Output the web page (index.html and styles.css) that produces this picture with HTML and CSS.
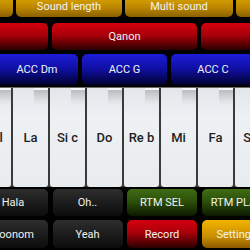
FILE: index.html
```html
<!DOCTYPE html>
<html lang="en">
<head>
    <meta charset="UTF-8">
    <meta name="viewport" content="width=device-width, initial-scale=1.0">
    <title>Piano</title>
    <link rel="stylesheet" href="styles.css">
</head>
<body>
    <div class="screen">
        <div class="row row-top">
            <div class="btn yellow w100"></div>
            <div class="btn yellow w106">Sound length</div>
            <div class="btn yellow w108">Multi sound</div>
            <div class="btn yellow w100"></div>
        </div>
        <div class="row row-red">
            <div class="btn red w100"></div>
            <div class="btn red w145">Qanon</div>
            <div class="btn red w100"></div>
        </div>
        <div class="row row-blue">
            <div class="btn blue w82">ACC Dm</div>
            <div class="btn blue w85">ACC G</div>
            <div class="btn blue w84">ACC C</div>
        </div>

        <div class="piano">
            <div class="key">Sol</div>
            <div class="key">La</div>
            <div class="key">Si c</div>
            <div class="key">Do</div>
            <div class="key">Re b</div>
            <div class="key">Mi</div>
            <div class="key">Fa</div>
            <div class="key">Sol</div>
        </div>

        <div class="row row-bottom">
            <div class="btn black w70">Hala</div>
            <div class="btn black w70">Oh..</div>
            <div class="btn green w70">RTM SEL</div>
            <div class="btn green w70">RTM PLAY</div>
        </div>
        <div class="row row-bottom last">
            <div class="btn black w70">Doonom</div>
            <div class="btn black w70">Yeah</div>
            <div class="btn red w70">Record</div>
            <div class="btn gold w70">Settings</div>
        </div>
    </div>
</body>
</html>
```

FILE: styles.css
```css
body {
    margin: 0;
    background-color: #000;
    font-family: Roboto, "Noto Sans", sans-serif;
    overflow: hidden;
}

.screen {
    width: 250px;
    height: 250px;
    overflow: hidden;
    display: flex;
    flex-direction: column;
}

.row {
    display: flex;
    flex-shrink: 0;
}

.btn {
    flex-shrink: 0;
    display: flex;
    align-items: center;
    justify-content: center;
    border-radius: 5px;
    color: #f2f2f2;
    font-size: 11px;
    white-space: nowrap;
}

/* rows */
.row-top {
    height: 22px;
    margin-top: -5px;
    margin-left: -87px;
    gap: 3px;
}

.row-red {
    height: 27px;
    margin-top: 6px;
    margin-left: -52px;
    gap: 4px;
}

.row-blue {
    height: 31px;
    margin-top: 4px;
    margin-left: -4px;
    gap: 4px;
}

.row-bottom {
    height: 27px;
    margin-top: 2px;
    margin-left: -22px;
    gap: 4.5px;
    font-size: 11px;
}

.row-bottom.last {
    height: 28px;
    margin-top: 4px;
}

/* widths */
.w70 { width: 70px; }
.w82 { width: 82px; }
.w84 { width: 84px; }
.w85 { width: 85px; }
.w100 { width: 100px; }
.w106 { width: 106px; }
.w108 { width: 108px; }
.w145 { width: 145px; }

/* colours */
.yellow {
    background: linear-gradient(#e0a800, #b98400 60%, #8a6000);
}

.gold {
    background: linear-gradient(#f2b400, #c98e00 60%, #8c5a00);
}

.red {
    background: linear-gradient(#d4000e, #a8000a 45%, #2a0000);
}

.blue {
    background: linear-gradient(#1c1cd8, #1010a8 45%, #000030);
}

.black {
    background: linear-gradient(#2e2e2e, #1c1c1c 50%, #0c0c0c);
}

.green {
    background: linear-gradient(#3f6c14, #2a4d08 50%, #0c1800);
}

/* piano */
.piano {
    display: flex;
    height: 99px;
    margin-top: 2px;
    margin-left: -24px;
    flex-shrink: 0;
    background-color: #3a3a3a;
    border-top: 1px solid #6a6a6a;
}

.key {
    position: relative;
    flex-shrink: 0;
    width: 35px;
    margin-right: 2px;
    display: flex;
    align-items: center;
    justify-content: center;
    background: linear-gradient(#e2e6ea, #eef1f4 30%, #e8ecef);
    border-radius: 0 0 3px 3px;
    color: #1e1e1e;
    font-size: 13px;
    font-weight: 500;
}

/* shadow under the black key */
.key::before {
    content: "";
    position: absolute;
    top: 0;
    right: 0;
    width: 14px;
    height: 16px;
    border-top: 2px solid #f6f6f6;
    background: linear-gradient(#b9bdc1, #dfe3e6 70%, rgba(232, 236, 239, 0));
}
```
